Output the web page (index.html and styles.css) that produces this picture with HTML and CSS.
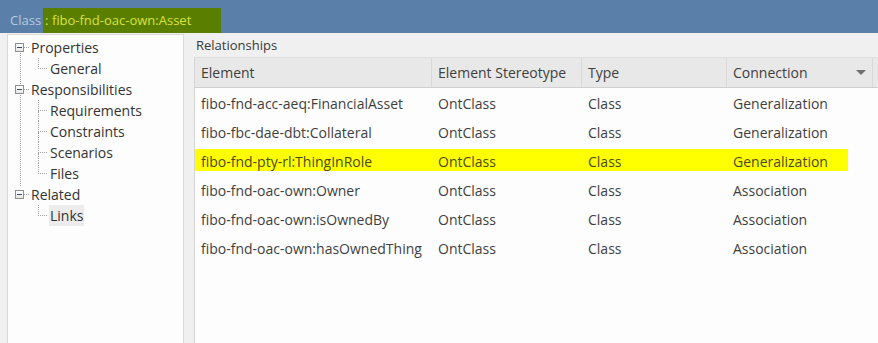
FILE: index.html
```html
<!DOCTYPE html>
<html>
<head>
<meta charset="utf-8">
<link rel="stylesheet" href="styles.css">
</head>
<body>
<div class="window">
  <div class="titlebar">
    <span class="title-kind">Class</span>
    <span class="title-name">: fibo-fnd-oac-own:Asset</span>
  </div>
  <div class="main">
    <div class="tree-panel">
      <div class="tree">
        <div class="node">
          <div class="row top"><span class="expander"></span><span class="hdash"></span><span class="label">Properties</span></div>
          <div class="row child last"><span class="elbow"><i class="et"></i><i class="eb"></i></span><span class="label">General</span></div>
        </div>
        <div class="node">
          <div class="row top"><span class="expander"></span><span class="hdash"></span><span class="label">Responsibilities</span></div>
          <div class="row child"><span class="elbow"><i class="et"></i><i class="eb"></i></span><span class="label">Requirements</span></div>
          <div class="row child"><span class="elbow"><i class="et"></i><i class="eb"></i></span><span class="label">Constraints</span></div>
          <div class="row child"><span class="elbow"><i class="et"></i><i class="eb"></i></span><span class="label">Scenarios</span></div>
          <div class="row child last"><span class="elbow"><i class="et"></i><i class="eb"></i></span><span class="label">Files</span></div>
        </div>
        <div class="node">
          <div class="row top"><span class="expander"></span><span class="hdash"></span><span class="label">Related</span></div>
          <div class="row child last"><span class="elbow"><i class="et"></i><i class="eb"></i></span><span class="label selected">Links</span></div>
        </div>
      </div>
    </div>
    <div class="rel-pane">
      <div class="section-label">Relationships</div>
      <div class="grid">
        <div class="thead">
          <div class="th">Element</div>
          <div class="th">Element Stereotype</div>
          <div class="th">Type</div>
          <div class="th th-sort">Connection<span class="caret"></span></div>
          <div class="th th-rest"></div>
        </div>
        <div class="tr"><div class="td">fibo-fnd-acc-aeq:FinancialAsset</div><div class="td">OntClass</div><div class="td">Class</div><div class="td">Generalization</div></div>
        <div class="tr"><div class="td">fibo-fbc-dae-dbt:Collateral</div><div class="td">OntClass</div><div class="td">Class</div><div class="td">Generalization</div></div>
        <div class="tr hl"><div class="td">fibo-fnd-pty-rl:ThingInRole</div><div class="td">OntClass</div><div class="td">Class</div><div class="td">Generalization</div></div>
        <div class="tr"><div class="td">fibo-fnd-oac-own:Owner</div><div class="td">OntClass</div><div class="td">Class</div><div class="td">Association</div></div>
        <div class="tr"><div class="td">fibo-fnd-oac-own:isOwnedBy</div><div class="td">OntClass</div><div class="td">Class</div><div class="td">Association</div></div>
        <div class="tr"><div class="td">fibo-fnd-oac-own:hasOwnedThing</div><div class="td">OntClass</div><div class="td">Class</div><div class="td">Association</div></div>
      </div>
    </div>
  </div>
</div>
</body>
</html>
```

FILE: styles.css
```css
* { box-sizing: border-box; }
html, body { margin: 0; padding: 0; }
body {
  background: #f0f0f0;
  font-family: "Open Sans", "Noto Sans", sans-serif;
  font-size: 13px;
  color: #3f3f3f;
  overflow: hidden;
}
.window { height: 100vh; display: flex; flex-direction: column; }

.titlebar {
  height: 33px;
  flex: none;
  background: #5a7fa9;
  display: flex;
  align-items: flex-end;
  padding-left: 10px;
}
.title-kind {
  color: #b9c9dc;
  height: 25px;
  line-height: 24px;
  margin-right: 2px;
}
.title-name {
  background: #5a7f00;
  color: #d9e23a;
  height: 25px;
  line-height: 24px;
  width: 178px;
  padding-left: 2px;
}

.main {
  flex: 1;
  display: flex;
  padding-top: 1px;
  min-height: 0;
}
.tree-panel {
  margin-left: 7px;
  width: 177px;
  background: #fdfdfd;
  border: 1px solid #dadada;
  border-bottom: none;
  flex: none;
}
.tree {
  padding-top: 2px;
  background: repeating-linear-gradient(to bottom, #a0a0a0 0 1px, transparent 1px 2px) 12px 18px / 1px 134px no-repeat;
}
.row {
  height: 21px;
  display: flex;
  align-items: center;
  white-space: nowrap;
}
.row.top { padding-left: 7px; }
.expander {
  width: 9px;
  height: 9px;
  border: 1px solid #8f8f8f;
  background: linear-gradient(#ffffff, #e6e6e6);
  display: flex;
  align-items: center;
  justify-content: center;
}
.expander::after {
  content: "";
  width: 5px;
  height: 1px;
  background: #2f4f7f;
}
.hdash {
  width: 5px;
  border-top: 1px dotted #a0a0a0;
  margin-right: 2px;
}
.row.child { padding-left: 30px; align-items: stretch; }
.elbow {
  width: 9px;
  display: flex;
  flex-direction: column;
  margin-right: 2px;
}
.elbow i { display: block; flex: 1; }
.elbow .et { border-left: 1px dotted #a0a0a0; border-bottom: 1px dotted #a0a0a0; }
.elbow .eb { border-left: 1px dotted #a0a0a0; }
.row.last .elbow .eb { border-left: none; }
.row.child .label { display: flex; align-items: center; padding: 0 1px; }
.label { color: #333; font-size: 14px; }
.label.selected { background: #ececec; }

.rel-pane {
  flex: 1;
  margin-left: 10px;
  display: flex;
  flex-direction: column;
  min-width: 0;
}
.section-label {
  height: 23px;
  line-height: 20px;
  padding: 1px 0 0 2px;
  color: #3a3a3a;
}
.grid {
  flex: 1;
  background: #fdfdfd;
  border-left: 1px solid #d6d6d6;
  border-top: 1px solid #dddddd;
}
.thead, .tr {
  display: grid;
  grid-template-columns: 237px 150px 145px 146px 1fr;
}
.thead {
  height: 30px;
  background: #e8e8e8;
  border-bottom: 1px solid #cfcfcf;
}
.th {
  display: flex;
  align-items: center;
  padding-left: 6px;
  border-right: 1px solid #d9d9d9;
  color: #3f3f3f;
  font-size: 14px;
}
.th-sort { justify-content: space-between; padding-right: 6px; }
.th-rest { border-right: none; }
.caret {
  width: 0;
  height: 0;
  border-left: 5px solid transparent;
  border-right: 5px solid transparent;
  border-top: 5px solid #6f6f6f;
}
.tr { height: 29px; }
.td {
  padding-left: 6px;
  line-height: 29px;
  padding-top: 1px;
  white-space: nowrap;
  font-size: 14px;
  color: #3f3f3f;
}
.tr.hl {
  background: linear-gradient(#ffff00, #ffff00) no-repeat 0 3px / 653px 22px;
}
.tr.hl .td { color: #4a4a20; }
```
